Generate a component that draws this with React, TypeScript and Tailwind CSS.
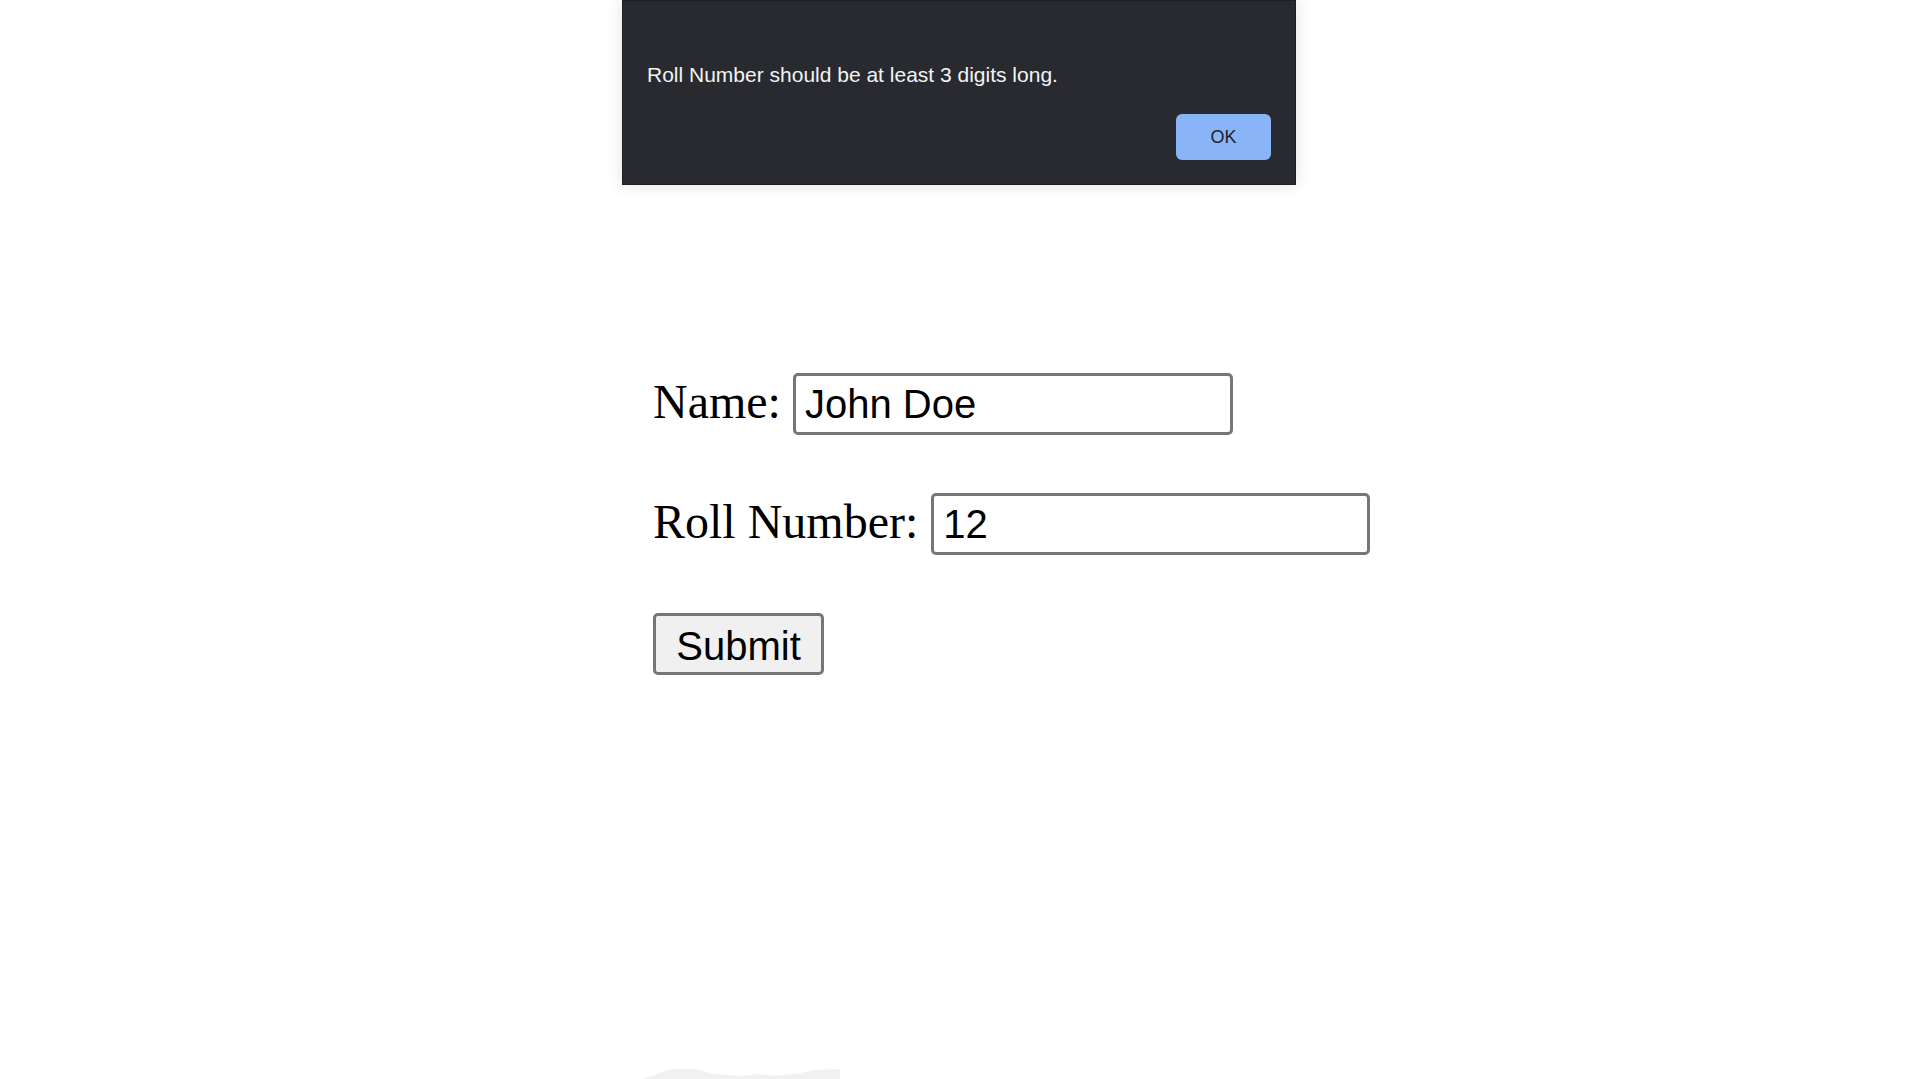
export default function App() {
  return (
    <div className="relative min-h-screen w-full overflow-hidden bg-white">
      <form
        className="flex flex-col gap-[58px] pl-[653px] pt-[373px]"
        onSubmit={(e) => e.preventDefault()}
      >
        <div className="flex h-[62px] items-center gap-[12px]">
          <label className="pb-[5px] font-['Liberation_Serif',serif] text-[48px] text-black">Name:</label>
          <input
            defaultValue="John Doe"
            className="h-[62px] w-[440px] rounded-[5px] border-[3px] border-[#767676] bg-white px-[9px] font-['Liberation_Sans',sans-serif] text-[40px] text-black outline-none"
          />
        </div>
        <div className="flex h-[62px] items-center gap-[13px]">
          <label className="pb-[5px] font-['Liberation_Serif',serif] text-[48px] text-black">Roll Number:</label>
          <input
            defaultValue="12"
            className="h-[62px] w-[439px] rounded-[5px] border-[3px] border-[#767676] bg-white px-[9px] font-['Liberation_Sans',sans-serif] text-[40px] text-black outline-none"
          />
        </div>
        <div className="flex h-[62px] items-center">
          <button
            type="submit"
            className="h-[62px] w-[171px] rounded-[5px] border-[3px] border-[#767676] bg-[#f0f0f0] font-['Liberation_Sans',sans-serif] text-[40px] text-black"
          >
            Submit
          </button>
        </div>
      </form>

      {/* alert dialog */}
      <div className="absolute left-[622px] top-0 flex h-[185px] w-[674px] flex-col border border-[#1e1f22] bg-[#292a2f] px-6 pb-6 shadow-[0_0_16px_rgba(0,0,0,0.12)]">
        <p className="mt-[61px] font-['Liberation_Sans',sans-serif] text-[21px] leading-[26px] text-[#f1f3f4]">
          Roll Number should be at least 3 digits long.
        </p>
        <div className="mt-auto flex justify-end">
          <button className="h-[46px] w-[95px] rounded-[6px] bg-[#8ab4f8] font-['Liberation_Sans',sans-serif] text-[18px] text-[#202124]">
            OK
          </button>
        </div>
      </div>

      <svg className="absolute left-[640px] top-[1065px]" width="210" height="14" viewBox="0 0 210 14">
        <path d="M3 14 L22 7 L32 4 L55 4 L75 9 L100 11 L118 9 L135 11 L160 8 L175 5 L200 4 L200 14 Z" fill="#f1f1f1" />
      </svg>
    </div>
  );
}
